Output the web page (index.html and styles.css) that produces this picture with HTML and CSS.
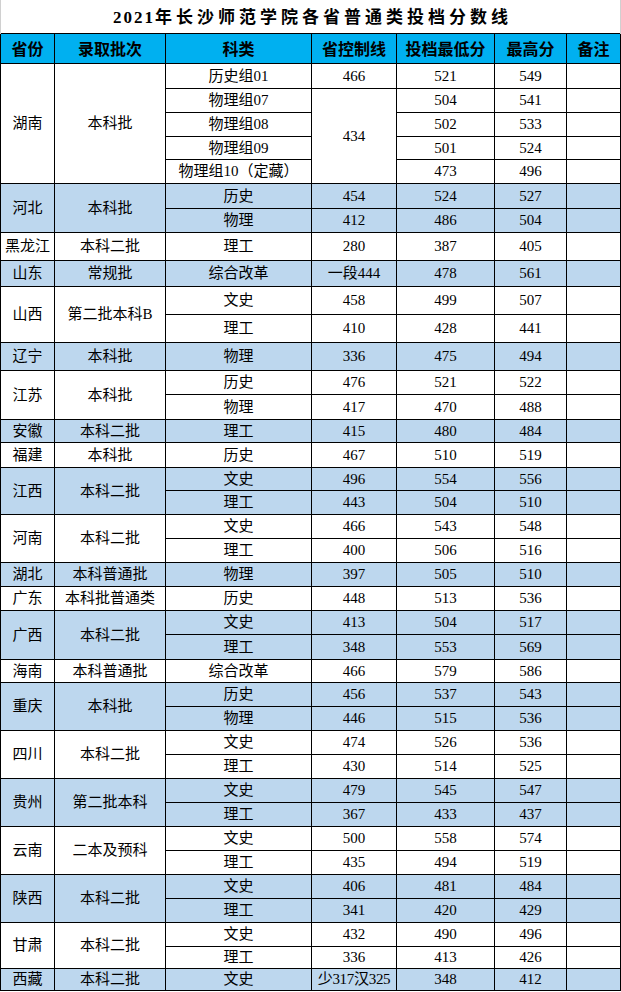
FILE: index.html
```html
<!DOCTYPE html>
<html lang="zh-CN">
<head>
<meta charset="utf-8">
<title>2021年长沙师范学院各省普通类投档分数线</title>
<link rel="stylesheet" href="styles.css">
</head>
<body>
<table class="sheet">
  <colgroup>
    <col class="c1"><col class="c2"><col class="c3"><col class="c4"><col class="c5"><col class="c6"><col class="c7">
  </colgroup>
  <tr class="title-row"><td colspan="7" class="title"><span class="num">2021</span>年长沙师范学院各省普通类投档分数线</td></tr>
  <tr class="head"><th>省份</th><th>录取批次</th><th>科类</th><th>省控制线</th><th>投档最低分</th><th>最高分</th><th>备注</th></tr>

  <tr class="w h25"><td rowspan="5">湖南</td><td rowspan="5">本科批</td><td>历史组01</td><td>466</td><td>521</td><td>549</td><td></td></tr>
  <tr class="w"><td>物理组07</td><td rowspan="4">434</td><td>504</td><td>541</td><td></td></tr>
  <tr class="w"><td>物理组08</td><td>502</td><td>533</td><td></td></tr>
  <tr class="w h23"><td>物理组09</td><td>501</td><td>524</td><td></td></tr>
  <tr class="w"><td>物理组10（定藏）</td><td>473</td><td>496</td><td></td></tr>

  <tr class="b h25"><td rowspan="2">河北</td><td rowspan="2">本科批</td><td>历史</td><td>454</td><td>524</td><td>527</td><td></td></tr>
  <tr class="b"><td>物理</td><td>412</td><td>486</td><td>504</td><td></td></tr>

  <tr class="w h28"><td>黑龙江</td><td>本科二批</td><td>理工</td><td>280</td><td>387</td><td>405</td><td></td></tr>
  <tr class="b h26"><td>山东</td><td>常规批</td><td>综合改革</td><td>一段444</td><td>478</td><td>561</td><td></td></tr>

  <tr class="w h28"><td rowspan="2">山西</td><td rowspan="2">第二批本科B</td><td>文史</td><td>458</td><td>499</td><td>507</td><td></td></tr>
  <tr class="w h28"><td>理工</td><td>410</td><td>428</td><td>441</td><td></td></tr>

  <tr class="b h28"><td>辽宁</td><td>本科批</td><td>物理</td><td>336</td><td>475</td><td>494</td><td></td></tr>

  <tr class="w"><td rowspan="2">江苏</td><td rowspan="2">本科批</td><td>历史</td><td>476</td><td>521</td><td>522</td><td></td></tr>
  <tr class="w h25"><td>物理</td><td>417</td><td>470</td><td>488</td><td></td></tr>

  <tr class="b h23"><td>安徽</td><td>本科二批</td><td>理工</td><td>415</td><td>480</td><td>484</td><td></td></tr>
  <tr class="w h25"><td>福建</td><td>本科批</td><td>历史</td><td>467</td><td>510</td><td>519</td><td></td></tr>

  <tr class="b h23"><td rowspan="2">江西</td><td rowspan="2">本科二批</td><td>文史</td><td>496</td><td>554</td><td>556</td><td></td></tr>
  <tr class="b"><td>理工</td><td>443</td><td>504</td><td>510</td><td></td></tr>

  <tr class="w"><td rowspan="2">河南</td><td rowspan="2">本科二批</td><td>文史</td><td>466</td><td>543</td><td>548</td><td></td></tr>
  <tr class="w"><td>理工</td><td>400</td><td>506</td><td>516</td><td></td></tr>

  <tr class="b"><td>湖北</td><td>本科普通批</td><td>物理</td><td>397</td><td>505</td><td>510</td><td></td></tr>
  <tr class="w"><td>广东</td><td>本科批普通类</td><td>历史</td><td>448</td><td>513</td><td>536</td><td></td></tr>

  <tr class="b"><td rowspan="2">广西</td><td rowspan="2">本科二批</td><td>文史</td><td>413</td><td>504</td><td>517</td><td></td></tr>
  <tr class="b h25"><td>理工</td><td>348</td><td>553</td><td>569</td><td></td></tr>

  <tr class="w h23"><td>海南</td><td>本科普通批</td><td>综合改革</td><td>466</td><td>579</td><td>586</td><td></td></tr>

  <tr class="b"><td rowspan="2">重庆</td><td rowspan="2">本科批</td><td>历史</td><td>456</td><td>537</td><td>543</td><td></td></tr>
  <tr class="b"><td>物理</td><td>446</td><td>515</td><td>536</td><td></td></tr>

  <tr class="w"><td rowspan="2">四川</td><td rowspan="2">本科二批</td><td>文史</td><td>474</td><td>526</td><td>536</td><td></td></tr>
  <tr class="w"><td>理工</td><td>430</td><td>514</td><td>525</td><td></td></tr>

  <tr class="b"><td rowspan="2">贵州</td><td rowspan="2">第二批本科</td><td>文史</td><td>479</td><td>545</td><td>547</td><td></td></tr>
  <tr class="b"><td>理工</td><td>367</td><td>433</td><td>437</td><td></td></tr>

  <tr class="w"><td rowspan="2">云南</td><td rowspan="2">二本及预科</td><td>文史</td><td>500</td><td>558</td><td>574</td><td></td></tr>
  <tr class="w"><td>理工</td><td>435</td><td>494</td><td>519</td><td></td></tr>

  <tr class="b"><td rowspan="2">陕西</td><td rowspan="2">本科二批</td><td>文史</td><td>406</td><td>481</td><td>484</td><td></td></tr>
  <tr class="b"><td>理工</td><td>341</td><td>420</td><td>429</td><td></td></tr>

  <tr class="w"><td rowspan="2">甘肃</td><td rowspan="2">本科二批</td><td>文史</td><td>432</td><td>490</td><td>496</td><td></td></tr>
  <tr class="w h22"><td>理工</td><td>336</td><td>413</td><td>426</td><td></td></tr>

  <tr class="b h22"><td>西藏</td><td>本科二批</td><td>文史</td><td class="tight">少317汉325</td><td>348</td><td>412</td><td></td></tr>
</table>
</body>
</html>
```

FILE: styles.css
```css
html, body {
  margin: 0;
  padding: 0;
  background: #ffffff;
}

.sheet {
  border-collapse: collapse;
  table-layout: fixed;
  width: 620px;
  font-family: "Liberation Serif", "Noto Sans CJK SC", sans-serif;
  font-size: 15px;
  color: #000000;
}

.c1 { width: 54px; }
.c2 { width: 111px; }
.c3 { width: 146px; }
.c4 { width: 85px; }
.c5 { width: 98px; }
.c6 { width: 72px; }
.c7 { width: 54px; }

.sheet td,
.sheet th {
  border: 1px solid #000000;
  padding: 0;
  text-align: center;
  vertical-align: middle;
  line-height: 18px;
  white-space: nowrap;
  overflow: hidden;
  height: 23px;
  box-sizing: border-box;
}

.sheet tr.title-row td {
  height: 33px;
  border: none;
  border-left: 1px solid #d0d0d0;
  border-right: 1px solid #d0d0d0;
  font-family: "Noto Sans CJK SC", sans-serif;
  font-weight: bold;
  font-size: 17px;
  letter-spacing: 4px;
  padding-left: 4px;
  padding-top: 1px;
}

.title .num {
  font-family: "Liberation Serif", serif;
  letter-spacing: 2px;
}

.sheet tr.head th {
  height: 30px;
  background: #00b0f0;
  font-family: "Noto Sans CJK SC", sans-serif;
  font-weight: bold;
  font-size: 16px;
}

.sheet tr.w td { background: #ffffff; }
.sheet tr.b td { background: #bdd7ee; }

.sheet tr td { height: 24px; }
.sheet tr.h22 td { height: 22px; }
.sheet tr.h23 td { height: 23px; }
.sheet tr.h25 td { height: 25px; }
.sheet tr.h26 td { height: 26px; }
.sheet tr.h28 td { height: 28px; }

.sheet td.tight {
  letter-spacing: -0.3px;
}
```
